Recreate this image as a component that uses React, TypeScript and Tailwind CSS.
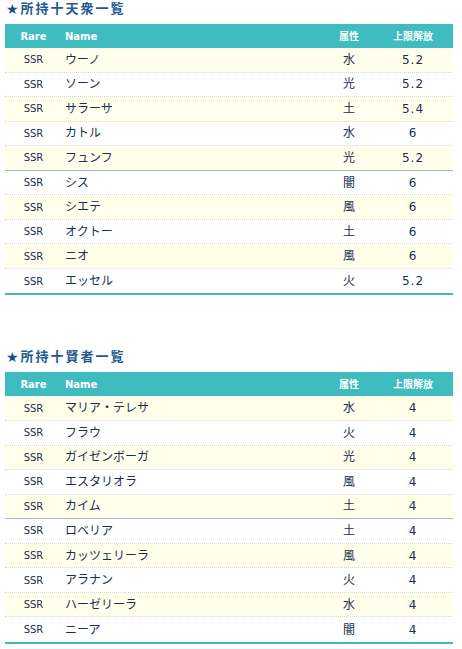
const font = { fontFamily: '"DejaVu Sans", "Noto Sans CJK JP", sans-serif' }

type Row = { rare: string; name: string; attr: string; limit: string }

const tenten: Row[] = [
  { rare: 'SSR', name: 'ウーノ', attr: '水', limit: '5.2' },
  { rare: 'SSR', name: 'ソーン', attr: '光', limit: '5.2' },
  { rare: 'SSR', name: 'サラーサ', attr: '土', limit: '5.4' },
  { rare: 'SSR', name: 'カトル', attr: '水', limit: '6' },
  { rare: 'SSR', name: 'フュンフ', attr: '光', limit: '5.2' },
  { rare: 'SSR', name: 'シス', attr: '闇', limit: '6' },
  { rare: 'SSR', name: 'シエテ', attr: '風', limit: '6' },
  { rare: 'SSR', name: 'オクトー', attr: '土', limit: '6' },
  { rare: 'SSR', name: 'ニオ', attr: '風', limit: '6' },
  { rare: 'SSR', name: 'エッセル', attr: '火', limit: '5.2' },
]

const kenja: Row[] = [
  { rare: 'SSR', name: 'マリア・テレサ', attr: '水', limit: '4' },
  { rare: 'SSR', name: 'フラウ', attr: '火', limit: '4' },
  { rare: 'SSR', name: 'ガイゼンボーガ', attr: '光', limit: '4' },
  { rare: 'SSR', name: 'エスタリオラ', attr: '風', limit: '4' },
  { rare: 'SSR', name: 'カイム', attr: '土', limit: '4' },
  { rare: 'SSR', name: 'ロベリア', attr: '土', limit: '4' },
  { rare: 'SSR', name: 'カッツェリーラ', attr: '風', limit: '4' },
  { rare: 'SSR', name: 'アラナン', attr: '火', limit: '4' },
  { rare: 'SSR', name: 'ハーゼリーラ', attr: '水', limit: '4' },
  { rare: 'SSR', name: 'ニーア', attr: '闇', limit: '4' },
]

function Section({ title, rows }: { title: string; rows: Row[] }) {
  return (
    <div className="w-[448px] ml-[5px]">
      <div className="h-[23px] flex items-start text-[13px] leading-[16px] tracking-[2px] text-[#215a8e] font-semibold">
        <span className="text-[14px] leading-[16px] ml-[1px] mr-[2px] tracking-normal text-[#1d4f80]">★</span>
        <span>{title}</span>
      </div>
      <div className="flex h-[24px] items-center bg-[#3fbcbf] text-white font-bold text-[10px]">
        <div className="w-[57px] text-center">Rare</div>
        <div className="flex-1 pl-[3px]">Name</div>
        <div className="w-[56px] text-center font-semibold">属性</div>
        <div className="w-[72px] text-center font-semibold">上限解放</div>
        <div className="w-[4px]" />
      </div>
      {rows.map((r, i) => (
        <div
          key={r.name}
          className={`flex h-[24.56px] items-center text-[#1a2f4e] ${i % 2 === 0 ? 'bg-[#ffffec]' : 'bg-white'} ${
            i === 4 ? 'border-b border-solid border-[#a3bcbc]' : i === rows.length - 1 ? '' : 'border-b border-dotted border-[#d8d8d8]'
          }`}
        >
          <div className="w-[57px] text-center text-[10px]">{r.rare}</div>
          <div className="flex-1 pl-[3px] text-[12px]">{r.name}</div>
          <div className="w-[56px] text-center text-[12px]">{r.attr}</div>
          <div className="w-[72px] text-center text-[12px] tracking-[1px]">{r.limit}</div>
          <div className="w-[4px]" />
        </div>
      ))}
      <div className="h-[2px] bg-[#45b6ba]" />
    </div>
  )
}

export default function App() {
  return (
    <div className="w-[462px] h-[649px] bg-white pt-[1px]" style={font}>
      <Section title="所持十天衆一覧" rows={tenten} />
      <div className="h-[54px]" />
      <Section title="所持十賢者一覧" rows={kenja} />
    </div>
  )
}
